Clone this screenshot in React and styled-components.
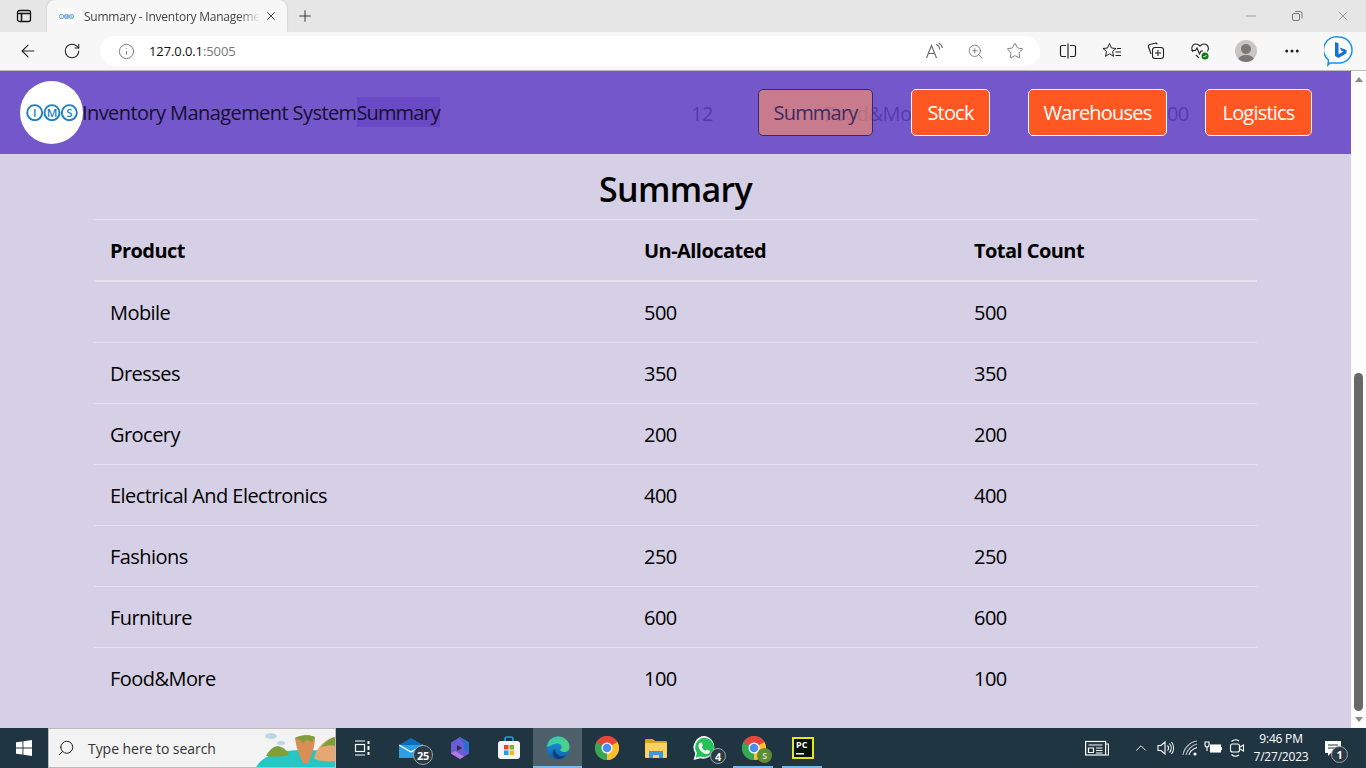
import React from "react";
import styled, { createGlobalStyle } from "styled-components";
import {
  ArrowLeft, RotateCw, Info, ZoomIn, Star, Plus, X, Minus, MoreHorizontal, Search, ChevronUp,
} from "lucide-react";

const Global = createGlobalStyle`
  html, body { margin: 0; padding: 0; height: 100%; overflow: hidden; }
  body { font-family: "Open Sans", "Noto Sans", sans-serif; }
  #root { height: 100%; }
`;

const Screen = styled.div`
  width: 1366px; height: 768px; display: flex; flex-direction: column; overflow: hidden; background: #d6d0e6;
`;

/* ---------- browser chrome ---------- */
const TabStrip = styled.div`
  height: 32px; background: #e6e6e6; display: flex; align-items: flex-end; flex: none;
`;
const SidebarToggle = styled.div`
  width: 47px; height: 32px; display: flex; align-items: center; justify-content: center; color: #1a1a1a;
`;
const Tab = styled.div`
  width: 240px; height: 32px; box-sizing: border-box; background: #f7f7f7; border-radius: 8px 8px 0 0;
  display: flex; align-items: center; padding: 0 9px 0 11px; box-shadow: 0 0 2px rgba(0,0,0,.2);
`;
const Favicon = styled.div`
  width: 16px; height: 16px; background: #fff; display: flex; align-items: center; justify-content: center; flex: none;
`;
const TabTitle = styled.div`
  margin-left: 10px; width: 176px; font-size: 12px; color: #444; white-space: nowrap; overflow: hidden;
  font-family: "Open Sans", sans-serif; letter-spacing: -0.25px;
  -webkit-mask-image: linear-gradient(to right, #000 88%, transparent);
  mask-image: linear-gradient(to right, #000 88%, transparent);
`;
const TabClose = styled.div`
  margin-left: auto; display: flex; color: #333;
`;
const NewTab = styled.div`
  margin-left: 9px; height: 32px; display: flex; align-items: center; color: #333;
`;
const WindowControls = styled.div`
  margin-left: auto; height: 32px; display: flex; align-items: center; gap: 30px; padding-right: 15px; color: #777;
`;
const AddressRow = styled.div`
  height: 38px; background: #f7f7f7; border-bottom: 1px solid #bdbdbd; display: flex; align-items: center; flex: none;
`;
const NavIcon = styled.div`
  width: ${(p) => p.$w || 44}px; display: flex; justify-content: center; align-items: center; color: ${(p) => p.$c || "#222"}; flex: none;
`;
const NavIconsLeft = styled.div`
  display: flex; padding-left: 6px; width: 100px; box-sizing: border-box;
`;
const Omnibox = styled.div`
  width: 940px; height: 30px; background: #fff; border-radius: 15px; display: flex; align-items: center; padding: 0 5px 0 18px; box-sizing: border-box; flex: none;
`;
const Url = styled.div`
  margin-left: 14px; font-size: 13px; color: #111; letter-spacing: -0.1px;
  span { color: #767676; }
`;
const OmniRight = styled.div`
  margin-left: auto; display: flex; gap: 0;
`;
const ToolIcons = styled.div`
  display: flex; align-items: center; margin-left: 6px;
`;
const Avatar = styled.div`
  width: 22px; height: 22px; border-radius: 50%; background: #c8c6c4; position: relative; overflow: hidden;
  &::before { content: ""; position: absolute; left: 6px; top: 4px; width: 10px; height: 10px; border-radius: 50%; background: #7a7774; }
  &::after { content: ""; position: absolute; left: 3px; top: 15px; width: 16px; height: 10px; border-radius: 50%; background: #7a7774; }
`;

/* ---------- viewport ---------- */
const Viewport = styled.div`
  flex: 1; min-height: 0; display: flex;
`;
const Page = styled.div`
  flex: 1; min-width: 0; background: #d6d0e6; color: #000;
`;
const Navbar = styled.nav`
  height: 83px; background: #7557cc; display: flex; align-items: center; position: relative; padding: 0 39px 0 20px;
`;
const Ghost = styled.span`
  position: absolute; top: 31px; left: ${(p) => p.$x}px; font-size: 20px; line-height: 24px; color: rgba(50, 30, 140, .5); letter-spacing: -0.55px; white-space: nowrap;
`;
const Logo = styled.div`
  width: 63px; height: 63px; border-radius: 50%; background: #fff; display: flex; align-items: center; justify-content: center; flex: none; z-index: 1;
`;
const BrandText = styled.span`
  font-size: 20px; line-height: 30px; color: #14102e; letter-spacing: -0.58px; white-space: nowrap; z-index: 1; margin-left: -1px; margin-top: 1px;
`;
const BrandPage = styled(BrandText)`
  background: #6a49c6; letter-spacing: -0.9px; margin: 0 0 1px; line-height: 28px; padding-top: 2px;
`;
const NavLinks = styled.div`
  margin-left: auto; display: flex; gap: 38px; z-index: 1;
`;
const NavButton = styled.button`
  height: 47px; width: ${(p) => p.$w}px; box-sizing: border-box; padding: 0; font: inherit; font-size: 20px; letter-spacing: -0.8px; border-radius: 5px;
  border: 1px solid ${(p) => (p.$active ? "#3a2a6a" : "#fff")};
  background: ${(p) => (p.$active ? "rgba(255, 147, 97, .6)" : "#ff5722")};
  color: ${(p) => (p.$active ? "#3c2a64" : "#fff")};
`;
const Heading = styled.h1`
  margin: 0; height: 65px; box-sizing: border-box; padding-top: 4px; display: flex; align-items: center; justify-content: center; font-size: 34px; font-weight: 600; letter-spacing: -0.7px; color: #000;
`;
const TableWrap = styled.div`
  padding: 0 94px;
`;
const Table = styled.table`
  width: 100%; border-collapse: separate; border-spacing: 0; table-layout: fixed; font-size: 20px; letter-spacing: -0.55px;
`;
const Th = styled.th`
  box-sizing: border-box; text-align: left; font-weight: 700; padding: 0 16px; height: 63px; border-top: 1px solid #e4e0ee; border-bottom: 2px solid #e4e0ee; letter-spacing: -0.55px; width: ${(p) => (p.$w ? `${p.$w}px` : "auto")};
`;
const Td = styled.td`
  box-sizing: border-box; padding: 0 16px; height: 61px; border-bottom: 1px solid #e4e0ee;
  tr:last-child > & { border-bottom: none; }
`;
const Scrollbar = styled.div`
  width: 15px; background: #fdfdfd; position: relative; flex: none; display: flex; flex-direction: column; align-items: center; padding: 6px 0; box-sizing: border-box;
`;
const Thumb = styled.div`
  width: 9px; height: 338px; margin-top: auto; margin-bottom: 6px; border-radius: 5px; background: #686868;
`;
const Arrow = styled.div`
  width: 0; height: 0; border-left: 4px solid transparent; border-right: 4px solid transparent;
  ${(p) => (p.$down ? "border-top: 5px solid #8a8a8a;" : "border-bottom: 5px solid #8a8a8a;")}
`;

/* ---------- taskbar ---------- */
const Taskbar = styled.div`
  height: 40px; background: #1f3541; display: flex; align-items: stretch; flex: none; color: #fff;
`;
const StartBtn = styled.div`
  width: 48px; display: flex; align-items: center; justify-content: center;
`;
const SearchBox = styled.div`
  width: 288px; background: #f3f3f3; border: 1px solid #bbb; box-sizing: border-box; display: flex; align-items: center; padding-left: 8px; position: relative; overflow: hidden; color: #222;
`;
const SearchText = styled.span`
  margin-left: 13px; font-size: 14px; letter-spacing: -0.05px; color: #333;
`;
const Art = styled.svg`
  position: absolute; right: 0; top: 0;
`;
const Apps = styled.div`
  display: flex; margin-left: 1px;
`;
const AppCell = styled.div`
  width: 49px; display: flex; align-items: center; justify-content: center; position: relative;
  background: ${(p) => (p.$active ? "#4d6069" : "transparent")};
  ${(p) => p.$bar && `&::after { content: ""; position: absolute; bottom: 0; left: ${p.$active ? 0 : 4}px; right: ${p.$active ? 0 : 5}px; height: 2px; background: #76b9ed; }`}
`;
const Badge = styled.span`
  position: absolute; right: ${(p) => p.$r}px; bottom: ${(p) => p.$b ?? 4}px; width: ${(p) => p.$d || 16}px; height: ${(p) => p.$d || 16}px; border-radius: 50%; background: #2c3b44; border: 1px solid #9aa3a8; box-sizing: border-box;
  color: #fff; font-size: 11px; font-weight: 700; display: flex; align-items: center; justify-content: center; letter-spacing: -0.3px;
`;
const ProfileBadge = styled(Badge)`
  background: #5f8d33; border: none; font-size: 9px; font-weight: 600; color: #dfe8d0;
`;
const Tray = styled.div`
  margin-left: auto; display: flex; align-items: center; color: #fff; padding-right: 11px;
`;
const TrayIcon = styled.div`
  width: ${(p) => p.$w || 24}px; margin-right: ${(p) => p.$mr || 0}px; display: flex; align-items: center; justify-content: center;
`;
const Clock = styled.div`
  width: 60px; margin-left: 1px; text-align: center; font-size: 12px; line-height: 18px; letter-spacing: -0.2px; white-space: nowrap;
`;
const Notif = styled.div`
  width: 44px; height: 100%; display: flex; align-items: center; justify-content: center; position: relative;
`;

const rows = [
  ["Mobile", 500, 500], ["Dresses", 350, 350], ["Grocery", 200, 200],
  ["Electrical And Electronics", 400, 400], ["Fashions", 250, 250], ["Furniture", 600, 600], ["Food&More", 100, 100],
];

const ImsMark = ({ w = 54, sw = 2 }) => (
  <svg width={w} height={w / 3} viewBox="0 0 54 18" fill="none" stroke="#1f7fc4" strokeWidth={sw}>
    <circle cx="9" cy="9" r="7.800" /><circle cx="27" cy="9" r="7.800" /><circle cx="45" cy="9" r="7.800" />
    <text x="9" y="13.300" fontSize="12" fontWeight="600" textAnchor="middle" fill="#1f7fc4" stroke="none" fontFamily="Open Sans">I</text>
    <text x="27" y="13.300" fontSize="12" fontWeight="600" textAnchor="middle" fill="#1f7fc4" stroke="none" fontFamily="Open Sans">M</text>
    <text x="45" y="13.300" fontSize="12" fontWeight="600" textAnchor="middle" fill="#1f7fc4" stroke="none" fontFamily="Open Sans">S</text>
  </svg>
);

const Edge = () => (
  <svg width="24" height="24" viewBox="0 0 24 24">
    <defs>
      <linearGradient id="e1" x1="0" y1="0" x2="1" y2="1"><stop offset="0" stopColor="#36c8b0" /><stop offset="1" stopColor="#50d67a" /></linearGradient>
      <linearGradient id="e2" x1="0" y1="0" x2="0" y2="1"><stop offset="0" stopColor="#1b9de2" /><stop offset="1" stopColor="#0f5fa8" /></linearGradient>
    </defs>
    <circle cx="12" cy="12" r="11.500" fill="url(#e2)" />
    <path d="M1 11C2 4 7 .5 12 .5c6.500 0 11.500 5 11.500 10.500 0 3-2.500 5-5.500 5-2 0-4-1-4-2.500 3-1 2-6-2.500-6C7 7.500 5 10 1 11z" fill="url(#e1)" />
    <path d="M9 13c0 6 6 9 11 6-3 4-8 5-11 3-3-2-3-7 0-9z" fill="#0c3f7c" />
  </svg>
);

const Chrome = ({ size = 24 }) => (
  <svg width={size} height={size} viewBox="0 0 24 24">
    <circle cx="12" cy="12" r="12" fill="#e5483a" />
    <path d="M12 12 1.600 6 A12 12 0 0 0 12 24z" fill="#34a853" />
    <path d="M12 12 12 24 A12 12 0 0 0 22.400 6z" fill="#fbc02d" />
    <path d="M1.600 6A12 12 0 0 1 22.400 6H12a6 6 0 0 0-5.200 3z" fill="#e5483a" />
    <circle cx="12" cy="12" r="5.500" fill="#fff" /><circle cx="12" cy="12" r="4.300" fill="#4a8cf0" />
  </svg>
);

export default function App() {
  return (
    <Screen>
      <Global />
      <TabStrip>
        <SidebarToggle>
          <svg width="16" height="16" viewBox="0 0 16 16" fill="none" stroke="#111" strokeWidth="1.300">
            <rect x="1.500" y="2.500" width="13" height="11" rx="2" /><path d="M1.500 5.500h13M5.500 5.500v8" strokeWidth="1.500" />
          </svg>
        </SidebarToggle>
        <Tab>
          <Favicon><ImsMark w={15} sw={2.500} /></Favicon>
          <TabTitle>Summary - Inventory Management System</TabTitle>
          <TabClose><X size={14} strokeWidth={1.500} /></TabClose>
        </Tab>
        <NewTab>
          <Plus size={18} strokeWidth={1.300} />
        </NewTab>
        <WindowControls>
          <Minus size={16} strokeWidth={1} />
          <svg width="16" height="16" viewBox="0 0 16 16" fill="none" stroke="#777"><rect x="3.500" y="5.500" width="7" height="7" rx="1.500" /><path d="M6 3.500h5a2 2 0 0 1 2 2v5" /></svg>
          <X size={16} strokeWidth={1} />
        </WindowControls>
      </TabStrip>
      <AddressRow>
        <NavIconsLeft>
          <NavIcon $w={44}><ArrowLeft size={20} strokeWidth={1.300} /></NavIcon>
          <NavIcon $w={44}><RotateCw size={18} strokeWidth={1.400} /></NavIcon>
        </NavIconsLeft>
        <Omnibox>
          <Info size={17} strokeWidth={1.200} color="#666" />
          <Url>127.0.0.1<span>:5005</span></Url>
          <OmniRight>
            <NavIcon $w={40} $c="#666">
              <svg width="20" height="18" viewBox="0 0 20 18" fill="none" stroke="#666" strokeWidth="1.100"><path d="M1.500 16 6.500 3.500 11.500 16M3.300 11.500h6.500" /><path d="M11 2.500a5 5 0 0 1 3.500 5M13.500 1a7 7 0 0 1 4 5" /></svg>
            </NavIcon>
            <NavIcon $w={40} $c="#666"><ZoomIn size={17} strokeWidth={1.100} /></NavIcon>
            <NavIcon $w={40} $c="#666"><Star size={18} strokeWidth={1.100} /></NavIcon>
          </OmniRight>
        </Omnibox>
        <ToolIcons>
          <NavIcon $w={44}>
            <svg width="18" height="16" viewBox="0 0 18 16" fill="none" stroke="#222" strokeWidth="1.200"><path d="M7 2.500H3a1.500 1.500 0 0 0-1.500 1.500v8A1.500 1.500 0 0 0 3 13.500h4M11 2.500h4A1.500 1.500 0 0 1 16.500 4v8a1.500 1.500 0 0 1-1.500 1.500h-4M9 .5v15" /></svg>
          </NavIcon>
          <NavIcon $w={44}>
            <svg width="20" height="18" viewBox="0 0 20 18" fill="none" stroke="#222" strokeWidth="1"><path d="M7.500 1.500 9.500 6l4.500.5-3.400 3 1 4.800-4.100-2.500-4 2.500 1-4.800L1 6.500 5.500 6z" /><path d="M15 6.500h4M13.500 10h5.500M13.500 13.500h5.500" /></svg>
          </NavIcon>
          <NavIcon $w={44}>
            <svg width="18" height="18" viewBox="0 0 18 18" fill="none" stroke="#222" strokeWidth="1.100"><path d="M4 12 1.500 5a2 2 0 0 1 1.300-2.500L8 1.200a2 2 0 0 1 2.300 1" /><rect x="5.500" y="5.500" width="11" height="11" rx="2.500" /><path d="M11 8v6M8 11h6" /></svg>
          </NavIcon>
          <NavIcon $w={44}>
            <svg width="20" height="20" viewBox="0 0 20 20" fill="none" stroke="#222" strokeWidth="1.100"><path d="M3 11C.5 7.500 2 3 6 3c2 0 3 1 4 2 1-1 2-2 4-2 4 0 5.500 4 3.500 7.500" /><path d="M1.500 9.500h4l1.500-2.500 2.500 6 1.500-3h2M6 14l3 3" /><circle cx="15" cy="15" r="3.500" fill="#107c10" stroke="none" /><path d="m13.500 15 1 1 2-2" stroke="#fff" strokeWidth="1" /></svg>
          </NavIcon>
          <NavIcon $w={48}><Avatar /></NavIcon>
          <NavIcon $w={44}><MoreHorizontal size={18} strokeWidth={2} /></NavIcon>
          <NavIcon $w={50}>
            <svg width="30" height="32" viewBox="0 0 30 32">
              <path d="M15 2a13 13 0 0 1 0 26h-9l-2 2 .5-5A13 13 0 0 1 15 2z" fill="#fff" stroke="#1b8fe8" strokeWidth="1.500" />
              <path d="M11 7l3.500 1.200v11l5-2.800-2.400-1-1.200-3 6.600 2.500v3.300L14.500 23 11 21z" fill="#1570d8" />
            </svg>
          </NavIcon>
        </ToolIcons>
      </AddressRow>

      <Viewport>
        <Page>
          <Navbar>
            <Ghost $x={691}>12</Ghost>
            <Ghost $x={824}>Food&amp;More</Ghost>
            <Ghost $x={1156}>100</Ghost>
            <Logo><ImsMark w={52} /></Logo>
            <BrandText>Inventory Management System</BrandText>
            <BrandPage>Summary</BrandPage>
            <NavLinks>
              <NavButton $active $w={115}>Summary</NavButton>
              <NavButton $w={79}>Stock</NavButton>
              <NavButton $w={139}>Warehouses</NavButton>
              <NavButton $w={107}>Logistics</NavButton>
            </NavLinks>
          </Navbar>
          <Heading>Summary</Heading>
          <TableWrap>
            <Table>
              <thead>
                <tr>
                  <Th $w={534}>Product</Th>
                  <Th $w={330}>Un-Allocated</Th>
                  <Th>Total Count</Th>
                </tr>
              </thead>
              <tbody>
                {rows.map(([name, a, b]) => (
                  <tr key={name}>
                    <Td>{name}</Td>
                    <Td>{a}</Td>
                    <Td>{b}</Td>
                  </tr>
                ))}
              </tbody>
            </Table>
          </TableWrap>
        </Page>
        <Scrollbar>
          <Arrow />
          <Thumb />
          <Arrow $down />
        </Scrollbar>
      </Viewport>

      <Taskbar>
        <StartBtn>
          <svg width="16" height="16" viewBox="0 0 16 16" fill="#fff"><path d="M0 2.300 6.500 1.400V7.500H0zM7.400 1.300 16 0v7.500H7.400zM0 8.500h6.500v6.100L0 13.700zM7.400 8.500H16V16l-8.600-1.300z" /></svg>
        </StartBtn>
        <SearchBox>
          <Search size={18} strokeWidth={1.300} style={{ transform: "scaleX(-1)" }} />
          <SearchText>Type here to search</SearchText>
          <Art width="80" height="40" viewBox="0 0 80 40">
            <path d="M0 40C6 28 20 21 50 21s30 5 30 5v14z" fill="#27c6c4" />
            <path d="M11 27c3-6 8-10 12-10 5 1 9 4 11 9-8 2-16 2-23 1z" fill="#7f9f3a" />
            <path d="M40 9c4-3 14-4 20-1 0 9-3 18-7 26h-5c-4-8-7-16-8-25z" fill="#d98e55" />
            <path d="M40 9c5-3 14-4 20-1l-3 5-5-2-4 3-3-3z" fill="#7f9f3a" />
            <path d="M59 30c1-8 8-19 21-22v24c-8 1-15 0-21-2z" fill="#e6a873" />
            <path d="M66 18c4-5 9-9 14-10v9c-5-1-10 0-14 1z" fill="#7f9f3a" />
            <ellipse cx="16" cy="7" rx="6" ry="3" fill="#b9d7e6" /><ellipse cx="26" cy="14" rx="4" ry="2" fill="#b9d7e6" />
          </Art>
        </SearchBox>
        <Apps>
          <AppCell>
            <svg width="16" height="16" viewBox="0 0 16 16" fill="none" stroke="#fff" strokeWidth="1.200"><path d="M1 1h10M1 15h10" /><rect x="1.500" y="4.500" width="9" height="7" /><path d="M14.500 1v3M14.500 6v4M14.500 12v3" strokeWidth="2" /></svg>
          </AppCell>
          <AppCell>
            <svg width="24" height="20" viewBox="0 0 24 20"><path d="M0 7 12 0l12 7v13H0z" fill="#0f6cbd" /><path d="M0 7h24v13H0z" fill="#2aa0ea" /><path d="m0 7 12 7 12-7" fill="none" stroke="#fff" strokeWidth="1.200" /></svg>
            <Badge $r={2} $d={20} $b={3}>25</Badge>
          </AppCell>
          <AppCell>
            <svg width="20" height="22" viewBox="0 0 20 22"><path d="M10 0 19 5.500v11L10 22 1 16.500v-11z" fill="#6b5bd6" /><path d="M10 0 19 5.500v11l-5-3V8z" fill="#2c6fd0" /><path d="M1 16.500 10 22l4-2.500-9-5.500z" fill="#b07be0" /><path d="m7 8 5 3-5 3z" fill="#1f3541" /></svg>
          </AppCell>
          <AppCell>
            <svg width="24" height="24" viewBox="0 0 24 24"><path d="M8 6V3a2 2 0 0 1 2-2h4a2 2 0 0 1 2 2v3" fill="none" stroke="#1aa3e8" strokeWidth="1.600" /><rect x="1" y="5" width="22" height="18" rx="3" fill="#f5f5f5" /><rect x="7" y="9" width="4.500" height="4.500" fill="#e8492e" /><rect x="12.500" y="9" width="4.500" height="4.500" fill="#7cb82f" /><rect x="7" y="14.500" width="4.500" height="4.500" fill="#1aa3e8" /><rect x="12.500" y="14.500" width="4.500" height="4.500" fill="#f9b916" /></svg>
          </AppCell>
          <AppCell $active $bar><Edge /></AppCell>
          <AppCell><Chrome /></AppCell>
          <AppCell>
            <svg width="22" height="20" viewBox="0 0 22 20"><path d="M0 2a1 1 0 0 1 1-1h7l2 2h11a1 1 0 0 1 1 1v3H0z" fill="#d9a021" /><rect y="5" width="22" height="15" rx="1" fill="#fbd25b" /><path d="M4 20v-7h14v7h-4v-3H8v3z" fill="#3a96dd" /></svg>
          </AppCell>
          <AppCell>
            <svg width="26" height="26" viewBox="0 0 24 24"><path d="M12 1a10.500 10.500 0 0 0-9 16L1.500 23l6-1.500A10.500 10.500 0 1 0 12 1z" fill="#fff" /><path d="M12 2.500a9 9 0 0 0-7.500 14L3.500 21l4.300-1.200A9 9 0 1 0 12 2.500z" fill="#25c15b" /><path d="M8.500 7c1 0 1.500 2.500 1.500 3l-1 1c.5 1.500 2 3 3.500 3.500l1-1c.5 0 3 .5 3 1.500 0 1.500-1.500 2.500-3 2.500-3.500 0-7.500-4-7.500-7.500C6 8.500 7 7 8.500 7z" fill="#fff" /></svg>
            <Badge $r={3} $b={4}>4</Badge>
          </AppCell>
          <AppCell $bar>
            <Chrome />
            <ProfileBadge $r={6} $d={15} $b={5}>S</ProfileBadge>
          </AppCell>
          <AppCell $bar>
            <svg width="22" height="22" viewBox="0 0 22 22"><rect width="22" height="22" fill="#e4e623" /><rect x="2" y="2" width="18" height="18" fill="#07140c" /><path d="M4 16h8v1.500H4z" fill="#fff" /><text x="4" y="11" fontSize="9" fontWeight="700" fill="#fff" fontFamily="Open Sans">PC</text></svg>
          </AppCell>
        </Apps>
        <Tray>
          <TrayIcon $w={36} $mr={15}>
            <svg width="24" height="16" viewBox="0 0 24 16" fill="none" stroke="#fff" strokeWidth="1.200"><rect x=".6" y="1.500" width="20" height="13.500" /><path d="M21 4h2.500v11H21M3.500 5h14M3.500 8h5v4.500h-5zM11 8h6.500M11 10.500h6.500M11 13h6.500" /></svg>
          </TrayIcon>
          <TrayIcon $w={22}><ChevronUp size={18} strokeWidth={1.200} /></TrayIcon>
          <TrayIcon $w={26}>
            <svg width="17" height="16" viewBox="0 0 17 16" fill="none" stroke="#fff" strokeWidth="1.100"><path d="M1 5.500h3L8 2v12l-4-3.500H1zM10.500 5.500a3.500 3.500 0 0 1 0 5M12.500 3.500a7 7 0 0 1 0 9M14.500 2a10 10 0 0 1 0 12" /></svg>
          </TrayIcon>
          <TrayIcon $w={24}>
            <svg width="16" height="16" viewBox="0 0 16 16" fill="none" stroke="#fff" strokeWidth="1.100"><path d="M1 15C2 8 8 2 15 1M4 15C5 10 10 5 15 4" opacity=".7" /><path d="M7 15c.5-3 3.500-6 8-7.500" /><circle cx="13" cy="14" r="1.600" fill="#fff" stroke="none" /></svg>
          </TrayIcon>
          <TrayIcon $w={22}>
            <svg width="18" height="14" viewBox="0 0 18 14" fill="none" stroke="#fff" strokeWidth="1.100"><rect x="6.500" y="4" width="10" height="7" fill="#fff" /><path d="M17.500 6v3" /><path d="M1 1v3a2 2 0 0 0 2 2 2 2 0 0 0 2-2V1M.5 1h5M3 6v4" /></svg>
          </TrayIcon>
          <TrayIcon $w={26}>
            <svg width="16" height="18" viewBox="0 0 16 18" fill="none" stroke="#fff" strokeWidth="1.100"><rect x="1.500" y="5" width="9" height="8" rx="2" /><path d="m11 8 3.500-2v6L11 10M2.500 2.500A6 6 0 0 1 10 2M2.500 15.500A6 6 0 0 0 10 16" /></svg>
          </TrayIcon>
          <Clock>9:46 PM<br />7/27/2023</Clock>
          <Notif>
            <svg width="18" height="18" viewBox="0 0 18 18"><path d="M1 2h16v12H7l-3 3v-3H1z" fill="#fff" /><path d="M4 6h10M4 9h10" stroke="#1f3541" /></svg>
            <Badge $r={7} $d={17} $b={5}>1</Badge>
          </Notif>
        </Tray>
      </Taskbar>
    </Screen>
  );
}
